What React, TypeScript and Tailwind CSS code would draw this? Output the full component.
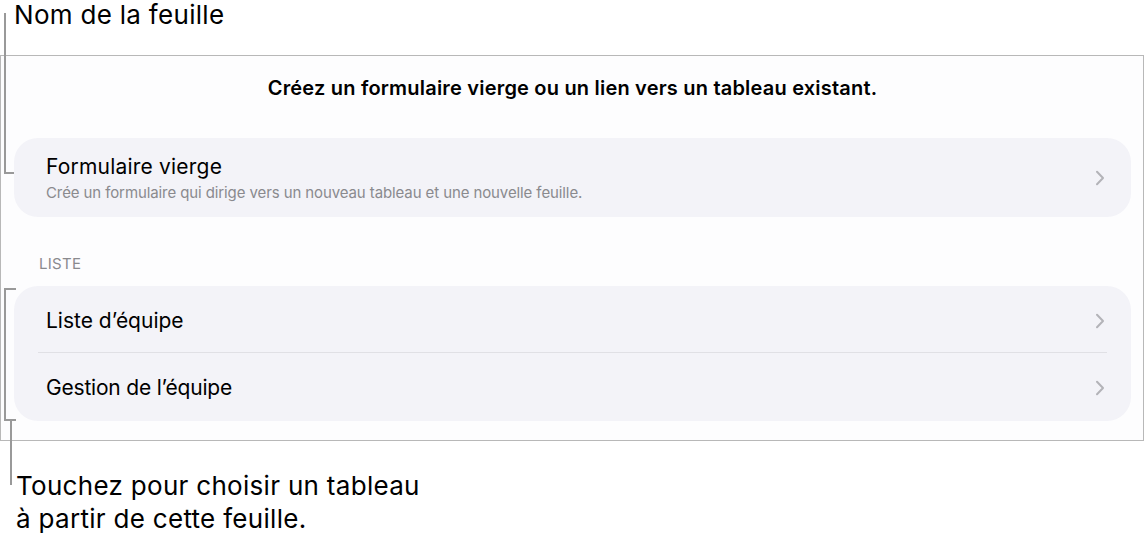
import React from "react";

function Chevron() {
  return (
    <svg width="10" height="16" viewBox="0 0 10 16" fill="none" className="shrink-0">
      <path d="M2 1.8 L8 8 L2 14.2" stroke="#b3b3b8" strokeWidth="2" strokeLinecap="round" strokeLinejoin="round" />
    </svg>
  );
}

export default function App() {
  return (
    <div className="relative w-[1144px] h-[537px] bg-white font-['Inter','Liberation_Sans',sans-serif] text-black overflow-hidden">
      {/* top callout */}
      <div className="h-[55px] pl-[14px] text-[26px] leading-[30px] tracking-[0.3px]">Nom de la feuille</div>

      {/* panel */}
      <div className="h-[386px] border border-[#b8b8b8] bg-[#fdfdfe] pl-[13px] pr-[12px]">
        <div className="pt-[20px] text-center text-[20px] leading-[24px] font-semibold tracking-[0.2px]">
          Créez un formulaire vierge ou un lien vers un tableau existant.
        </div>

        <div className="mt-[38px] h-[79px] rounded-[24px] bg-[#f3f3f8] flex items-center pl-[32px] pr-[26px]">
          <div className="flex-1 flex flex-col gap-[4px]">
            <div className="text-[21px] leading-[26px] tracking-[0.2px]">Formulaire vierge</div>
            <div className="text-[15px] leading-[18px] text-[#8a8a8e] tracking-[-0.1px]">
              Crée un formulaire qui dirige vers un nouveau tableau et une nouvelle feuille.
            </div>
          </div>
          <Chevron />
        </div>

        <div className="mt-[38px] pl-[25px] text-[15px] leading-[18px] text-[#8a8a8e] tracking-[0.3px]">LISTE</div>

        <div className="mt-[13px] rounded-[24px] bg-[#f3f3f8] flex flex-col">
          <div className="h-[66px] flex items-center pl-[32px] pr-[26px] pt-[3px]">
            <div className="flex-1 text-[21px] leading-[26px]">Liste d’équipe</div>
            <Chevron />
          </div>
          <div className="mx-[24px] h-px bg-[#e0e0e5]" />
          <div className="h-[68px] flex items-center pl-[32px] pr-[26px] pt-[2px]">
            <div className="flex-1 text-[21px] leading-[26px] tracking-[-0.2px]">Gestion de l’équipe</div>
            <Chevron />
          </div>
        </div>
      </div>

      {/* bottom callout */}
      <div className="pt-[28px] pl-[16px] text-[26px] leading-[33px] tracking-[0.3px]">
        Touchez pour choisir un tableau
        <br />à partir de cette feuille.
      </div>

      {/* callout lines */}
      <div className="absolute left-[4px] top-[13px] w-[2px] h-[161px] bg-[#999999]" />
      <div className="absolute left-[4px] top-[172px] w-[10px] h-[2px] bg-[#999999]" />

      <div className="absolute left-[4px] top-[288px] w-[12px] h-[2px] bg-[#999999]" />
      <div className="absolute left-[4px] top-[288px] w-[2px] h-[133px] bg-[#999999]" />
      <div className="absolute left-[4px] top-[419px] w-[12px] h-[2px] bg-[#999999]" />
      <div className="absolute left-[10px] top-[419px] w-[2px] h-[66px] bg-[#999999]" />
    </div>
  );
}
